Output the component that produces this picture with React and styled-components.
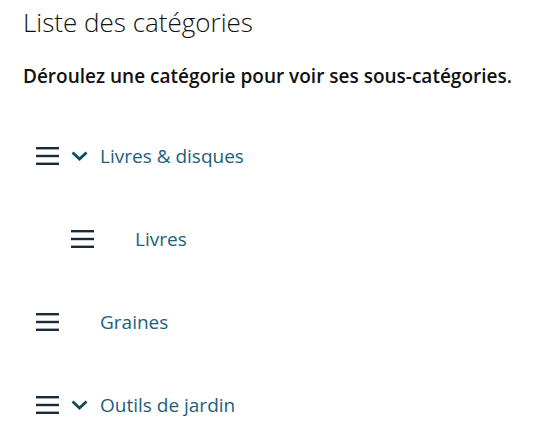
import styled, { createGlobalStyle } from 'styled-components';

const GlobalStyle = createGlobalStyle`
  body {
    margin: 0;
    background: #ffffff;
    font-family: "Open Sans", "Noto Sans", sans-serif;
  }
`;

const categories = [
  { name: 'Livres & disques', level: 0, toggle: true },
  { name: 'Livres', level: 1, toggle: false },
  { name: 'Graines', level: 0, toggle: false },
  { name: 'Outils de jardin', level: 0, toggle: true },
];

function Handle() {
  return (
    <svg width="23" height="18" viewBox="0 0 23 18">
      <rect x="0" y="0" width="23" height="2.4" fill="#172b3a" />
      <rect x="0" y="7.8" width="23" height="2.4" fill="#172b3a" />
      <rect x="0" y="15.6" width="23" height="2.4" fill="#172b3a" />
    </svg>
  );
}

function Chevron() {
  return (
    <svg width="17" height="10" viewBox="0 0 17 10">
      <path d="M1.5 1.5 L8.5 8 L15.5 1.5" fill="none" stroke="#0f4d5c" strokeWidth="2.8" />
    </svg>
  );
}

export default function App() {
  return (
    <Page>
      <GlobalStyle />
      <Title>Liste des catégories</Title>
      <Hint>Déroulez une catégorie pour voir ses sous-catégories.</Hint>
      <List>
        {categories.map((c) => (
          <Row key={c.name} $level={c.level}>
            <Handle />
            <Toggle>{c.toggle && <Chevron />}</Toggle>
            <Label>{c.name}</Label>
          </Row>
        ))}
      </List>
    </Page>
  );
}

const Page = styled.div`
  padding: 6px 23px 0;
`;

const Title = styled.h1`
  margin: 0;
  font-size: 26px;
  font-weight: 300;
  color: #111;
  line-height: 32px;
`;

const Hint = styled.p`
  margin: 26px 0 0;
  font-size: 19px;
  font-weight: 600;
  color: #111;
  line-height: 24px;
`;

const List = styled.ul`
  list-style: none;
  margin: 54px 0 0;
  padding: 0;
  display: flex;
  flex-direction: column;
  gap: 55px;
`;

const Row = styled.li`
  display: flex;
  align-items: center;
  height: 28px;
  padding-left: ${(p) => 13 + p.$level * 35}px;
`;

const Toggle = styled.span`
  width: 41px;
  display: flex;
  justify-content: center;
`;

const Label = styled.span`
  font-size: 19px;
  color: #1b5f7c;
`;
